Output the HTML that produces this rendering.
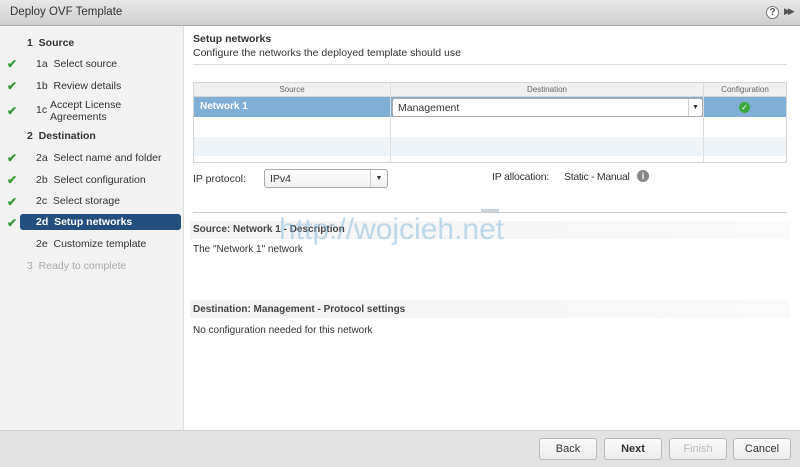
<!DOCTYPE html>
<html><head><style>
*{margin:0;padding:0;box-sizing:border-box}
body{width:800px;height:467px;overflow:hidden;font-family:"Liberation Sans",sans-serif;font-size:10.5px;color:#333;background:#fff;position:relative}
.abs{position:absolute}
#title{left:0;top:0;width:800px;height:26px;background:linear-gradient(#e8e8e8,#cfcfcf);border-bottom:1px solid #aaa}
#title span{position:absolute;left:10px;top:6px;font-size:11.5px;color:#333}
#left{left:0;top:26px;width:184px;height:404px;background:#f2f2f2;border-right:1px solid #ddd}
.it{position:absolute;font-size:10.5px;color:#333}
.ck{position:absolute;left:7px;color:#3a9a3a;font-size:12px;font-weight:bold}
#footer{left:0;top:430px;width:800px;height:37px;background:#e3e3e3;border-top:1px solid #d0d0d0}
.btn{position:absolute;top:438px;height:22px;border:1px solid #b8b8b8;border-radius:3px;background:linear-gradient(#fbfbfb,#ececec);text-align:center;line-height:20px;font-size:11px;color:#333}
</style></head><body>
<div id="title" class="abs"><span>Deploy OVF Template</span>
<div class="abs" style="left:766px;top:6px;width:13px;height:13px;border-radius:50%;background:#fff;border:1px solid #777;font-size:10px;font-weight:bold;text-align:center;line-height:11px;color:#555">?</div>
<div class="abs" style="left:784px;top:6px;font-size:9px;color:#555;letter-spacing:-3px">▶▶</div>
</div>
<div id="left" class="abs"></div>
<div class="it" style="left:27px;top:37px;font-weight:bold">1&nbsp; Source</div>
<div class="ck" style="top:57px">✔</div><div class="it" style="left:36px;top:58px">1a&nbsp; Select source</div>
<div class="ck" style="top:79px">✔</div><div class="it" style="left:36px;top:80px">1b&nbsp; Review details</div>
<div class="ck" style="top:104px">✔</div><div class="it" style="left:36px;top:104px">1c</div><div class="it" style="left:50px;top:99px;line-height:12px">Accept License<br>Agreements</div>
<div class="it" style="left:27px;top:130px;font-weight:bold">2&nbsp; Destination</div>
<div class="ck" style="top:151px">✔</div><div class="it" style="left:36px;top:152px">2a&nbsp; Select name and folder</div>
<div class="ck" style="top:173px">✔</div><div class="it" style="left:36px;top:174px">2b&nbsp; Select configuration</div>
<div class="ck" style="top:195px">✔</div><div class="it" style="left:36px;top:195px">2c&nbsp; Select storage</div>
<div class="ck" style="top:216px">✔</div>
<div class="abs" style="left:20px;top:214px;width:161px;height:16px;background:#234f7e;border-radius:3px"></div>
<div class="it" style="left:36px;top:216px;color:#fff;font-weight:bold">2d&nbsp; Setup networks</div>
<div class="it" style="left:36px;top:238px">2e&nbsp; Customize template</div>
<div class="it" style="left:27px;top:260px;color:#aaa">3&nbsp; Ready to complete</div>

<div class="abs" style="left:193px;top:33px;font-weight:bold;font-size:10.5px;color:#333">Setup networks</div>
<div class="abs" style="left:193px;top:47px;font-size:10.5px;color:#333">Configure the networks the deployed template should use</div>
<div class="abs" style="left:193px;top:64px;width:594px;height:1px;background:#ddd"></div>

<div class="abs" style="left:193px;top:82px;width:594px;height:81px;border:1px solid #d6d6d6;background:#fff">
 <div class="abs" style="left:0;top:0;width:592px;height:14px;background:#f0f0f0;border-bottom:1px solid #d6d6d6"></div>
 <div class="abs" style="left:0;top:14px;width:592px;height:20px;background:#7fafd6"></div>
 <div class="abs" style="left:0;top:54px;width:592px;height:19px;background:#eef3f8"></div>
 <div class="abs" style="left:196px;top:0;width:1px;height:80px;background:#ddd"></div>
 <div class="abs" style="left:509px;top:0;width:1px;height:80px;background:#ddd"></div>
 <div class="abs" style="left:0;top:2px;width:196px;text-align:center;font-size:8px;color:#666">Source</div>
 <div class="abs" style="left:197px;top:2px;width:312px;text-align:center;font-size:8px;color:#666">Destination</div>
 <div class="abs" style="left:510px;top:2px;width:82px;text-align:center;font-size:8px;color:#666">Configuration</div>
 <div class="abs" style="left:6px;top:18px;color:#fff;font-weight:bold;font-size:10px">Network 1</div>
 <div class="abs" style="left:198px;top:15px;width:311px;height:19px;background:#fff;border:1px solid #aaa;border-radius:3px"><span style="position:absolute;left:5px;top:3px;font-size:10.5px">Management</span><span style="position:absolute;right:0;top:0;width:14px;height:17px;border-left:1px solid #ccc;font-size:7px;text-align:center;line-height:17px">▼</span></div>
 <div class="abs" style="left:545px;top:19px;width:11px;height:11px;border-radius:50%;background:#3fa83f;color:#fff;font-size:8px;text-align:center;line-height:11px">✓</div>
</div>

<div class="abs" style="left:193px;top:173px">IP protocol:</div>
<div class="abs" style="left:264px;top:169px;width:124px;height:19px;border:1px solid #aaa;border-radius:3px;background:linear-gradient(#fff,#f0f0f0)"><span style="position:absolute;left:5px;top:3px">IPv4</span><span style="position:absolute;right:0;top:0;width:17px;height:17px;border-left:1px solid #ccc;font-size:7px;text-align:center;line-height:17px">▼</span></div>
<div class="abs" style="left:492px;top:171px;letter-spacing:-0.2px">IP allocation:</div>
<div class="abs" style="left:564px;top:171px;letter-spacing:-0.3px">Static - Manual</div>
<div class="abs" style="left:637px;top:170px;width:12px;height:12px;border-radius:50%;background:#888;color:#fff;font-size:9px;font-weight:bold;text-align:center;line-height:12px">i</div>

<div class="abs" style="left:193px;top:212px;width:594px;height:1px;background:#ccc"></div>
<div class="abs" style="left:481px;top:209px;width:18px;height:3px;background:#c8d4e0"></div>
<div class="abs" style="left:190px;top:221px;width:600px;height:18px;background:linear-gradient(90deg,#f3f3f3,#fafafa)"></div>
<div class="abs" style="left:193px;top:224px;font-weight:bold;font-size:10px;color:#444">Source: Network 1 - Description</div>
<div class="abs" style="left:279px;top:213px;font-size:30px;color:rgba(120,180,215,.45)">http://wojcieh.net</div>
<div class="abs" style="left:193px;top:244px;font-size:10px">The "Network 1" network</div>
<div class="abs" style="left:190px;top:300px;width:600px;height:18px;background:linear-gradient(90deg,#f3f3f3,#fafafa)"></div>
<div class="abs" style="left:193px;top:304px;font-weight:bold;font-size:10px;color:#444">Destination: Management - Protocol settings</div>
<div class="abs" style="left:193px;top:325px;font-size:10px">No configuration needed for this network</div>

<div id="footer" class="abs"></div>
<div class="btn" style="left:539px;width:58px">Back</div>
<div class="btn" style="left:604px;width:58px;font-weight:bold">Next</div>
<div class="btn" style="left:669px;width:58px;color:#bbb">Finish</div>
<div class="btn" style="left:733px;width:58px">Cancel</div>
</body></html>
